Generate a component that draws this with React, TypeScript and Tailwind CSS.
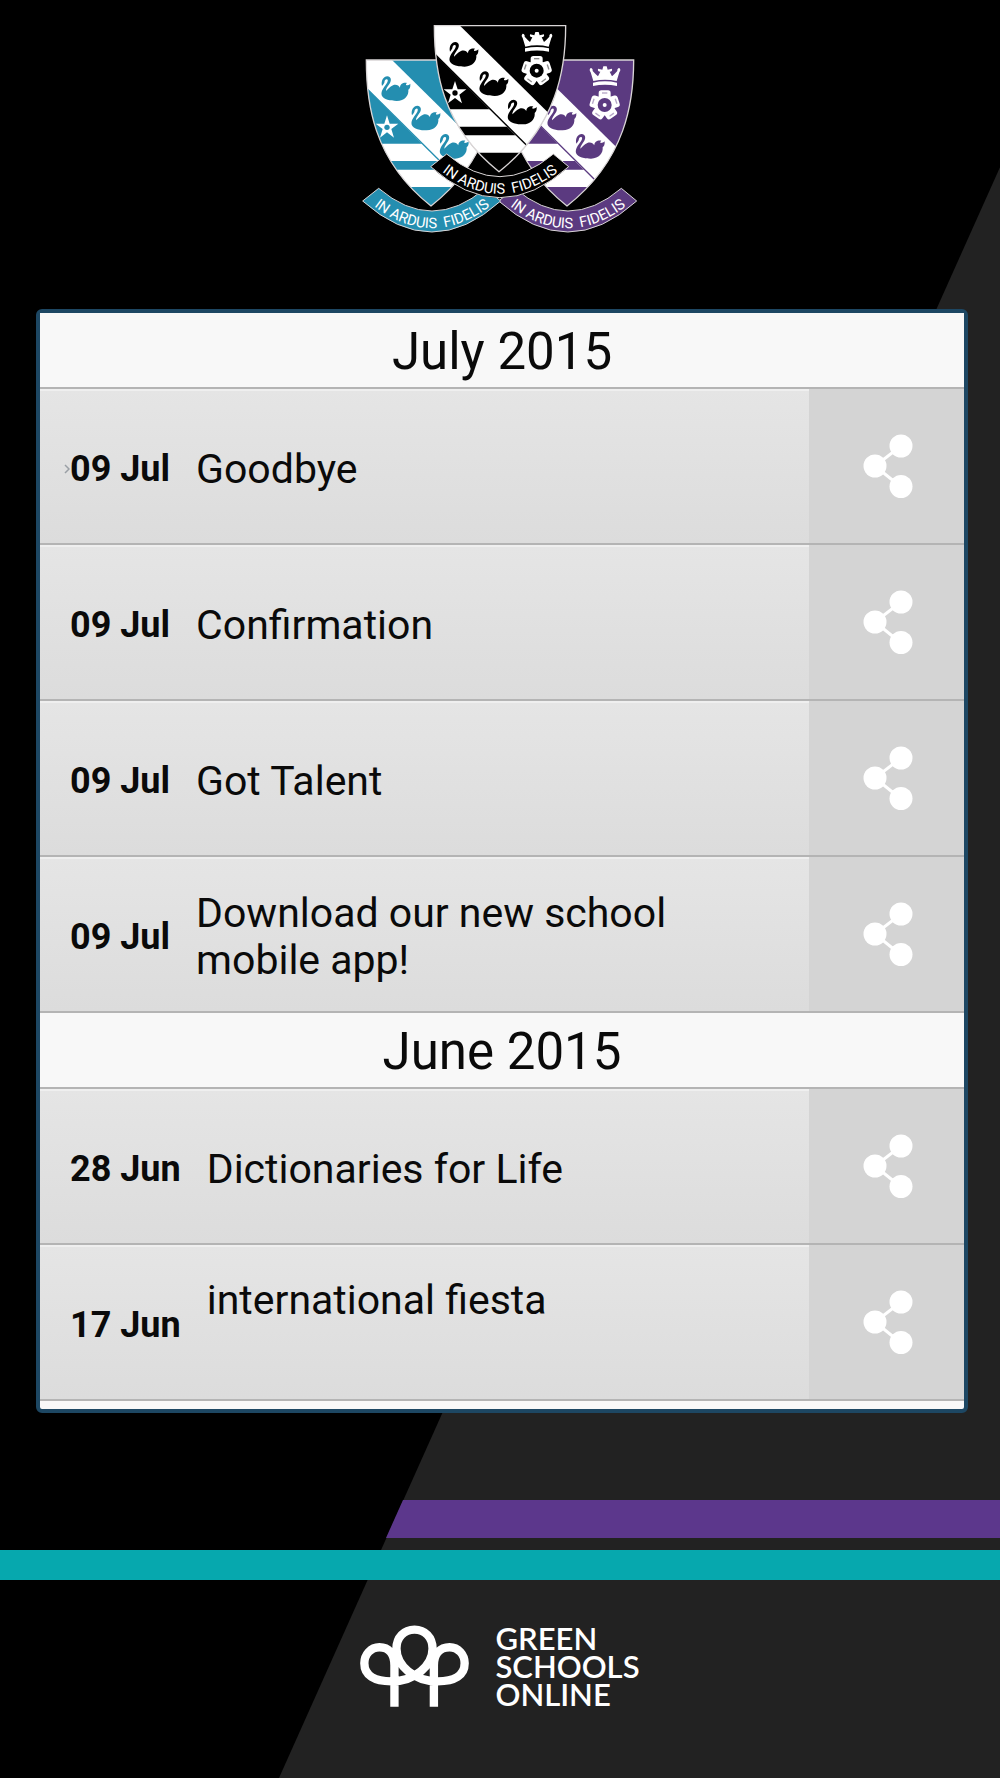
import React from "react";

type Notice = { date: string; title: string; marked?: boolean; short?: boolean };
type Month = { name: string; notices: Notice[] };

const months: Month[] = [
  {
    name: "July 2015",
    notices: [
      { date: "09 Jul", title: "Goodbye", marked: true },
      { date: "09 Jul", title: "Confirmation" },
      { date: "09 Jul", title: "Got Talent" },
      { date: "09 Jul", title: "Download our new school mobile app!" },
    ],
  },
  {
    name: "June 2015",
    notices: [
      { date: "28 Jun", title: "Dictionaries for Life" },
      { date: "17 Jun", title: "international fiesta", short: true },
    ],
  },
];

const SHIELD = "M43 47H437C437 170 415 345 237 485C60 345 43 170 43 47Z";
const SWAN =
  "M3 28C-1 12 8 -1 19 -1C30 0 32 10 27 19C21 29 14 36 15 43C21 38 26 30 36 26C46 22 53 27 57 33C57 23 66 17 78 19C74 22 74 26 77 26C81 26 85 24 88 21C89 32 85 37 82 39C84 56 71 73 47 73C29 73 7 70 2 56C-2 42 13 28 19 17C22 10 20 7 16 8C11 9 11 14 10 18C8 21 6 25 3 28Z";

function Crest({ color, id, x, y }: { color: string; id: string; x: number; y: number }) {
  return (
    <g transform={`translate(${x} ${y})`}>
      <clipPath id={`${id}-clip`}>
        <path d={SHIELD} />
      </clipPath>
      <g clipPath={`url(#${id}-clip)`}>
        <rect x="40" y="40" width="400" height="450" fill={color} />
        <path d="M43 47H120L470 392V560L43 131Z" fill="#fff" />
        <path d="M40 298H211L264 350H40ZM40 376H290L322 408L300 428H40Z" fill="#fff" />
        <path d="M45 133L322 408" stroke={color} strokeWidth="4" fill="none" />
        <path d="M322 408L300 428" stroke="#fff" strokeWidth="3" />
      </g>
      <path d={SHIELD} fill="none" stroke="#d9d5d6" strokeWidth="4" />
      <g fill={color}>
        <path d={SWAN} transform="translate(87 97)" />
        <path d={SWAN} transform="translate(177 185)" />
        <path d={SWAN} transform="translate(262 270)" />
      </g>
      <path
        d="M105 213L113 238L139 238L118 254L126 280L105 264L84 280L92 254L71 238L97 238Z"
        fill="#fff"
      />
      <circle cx="105" cy="249" r="8" fill={color} />
      <g fill="#fff">
        <path d="M316 110L308 84Q302 76 308 71Q315 72 314 80Q325 92 330 96L337 82Q328 82 330 73L343 76L346 66H356L359 76L372 73Q374 82 365 82L372 96Q377 92 388 80Q387 72 394 71Q400 76 394 84L386 110Q351 102 316 110Z" />
        <path d="M315 115Q351 107 387 115V125Q351 118 315 125Z" />
        {[0, 72, 144, 216, 288].map((a) => (
          <g key={a} transform={`rotate(${a} 350 182)`}>
            <rect x="332" y="138" width="36" height="26" rx="8" />
            <rect x="342" y="144" width="16" height="4" fill={color} opacity="0.45" />
          </g>
        ))}
        <circle cx="350" cy="182" r="31" />
      </g>
      <circle cx="350" cy="182" r="21" fill={color} />
      <circle cx="350" cy="182" r="6" fill="#fff" />
      <path
        d="M80 432Q240 568 400 432L446 470Q240 656 32 470Z"
        fill={color}
        stroke="#d9d5d6"
        strokeWidth="3"
      />
      <path id={`${id}-motto`} d="M50 473Q240 630 430 473" fill="none" />
      <text fill="#fff" fontFamily="Roboto, sans-serif" fontSize="44" textAnchor="middle">
        <textPath href={`#${id}-motto`} startOffset="50%">
          IN ARDUIS&#160; FIDELIS
        </textPath>
      </text>
    </g>
  );
}

function SchoolCrest() {
  return (
    <svg viewBox="0 0 840 642" className="h-[214px] w-[280px]" role="img" aria-label="In Arduis Fidelis school crest">
      <Crest id="purple" color="#5b3a80" x={384} y={73} />
      <Crest id="teal" color="#248eb0" x={-24} y={73} />
      <Crest id="black" color="#000" x={180} y={-30} />
    </svg>
  );
}

function ShareIcon() {
  return (
    <svg viewBox="0 0 52 64" className="h-16 w-[52px]" fill="#fff" aria-hidden="true">
      <path d="M40 12L14 32L40 53" fill="none" stroke="#fff" strokeWidth="3" />
      <circle cx="14" cy="32" r="11.5" />
      <circle cx="40" cy="12" r="11.5" />
      <circle cx="40" cy="52.5" r="11.5" />
    </svg>
  );
}

function NoticeRow({ notice }: { notice: Notice }) {
  return (
    <li className="flex h-[156px] border-b-2 border-[#b4b4b4]">
      <a
        href="#notice"
        className="flex min-w-0 flex-1 items-center gap-[26px] border-t-2 border-[#efefef] bg-linear-to-b from-[#e5e5e5] to-[#dcdcdc] pt-1 pr-8 pl-[30px] text-[#0a0a0a]"
      >
        <span className="relative shrink-0 text-4xl font-bold whitespace-nowrap">
          {notice.marked && (
            <svg
              viewBox="0 0 6 10"
              className="absolute top-1/2 -left-1.5 h-2.5 w-1.5 -translate-y-1/2"
              fill="none"
              stroke="#9a9fa5"
              strokeWidth="1.5"
              aria-hidden="true"
            >
              <path d="M1 1L5 5L1 9" />
            </svg>
          )}
          {notice.date}
        </span>
        <span className={notice.short ? "min-h-24 text-[41px] leading-[47px]" : "text-[41px] leading-[47px]"}>
          {notice.title}
        </span>
      </a>
      <button
        type="button"
        aria-label={`Share ${notice.title}`}
        className="flex w-[155px] shrink-0 items-center justify-center bg-[#d4d4d4]"
      >
        <ShareIcon />
      </button>
    </li>
  );
}

function TreeLogo() {
  return (
    <svg viewBox="0 0 326 244" className="h-[82px] w-[109px]" fill="none" stroke="#fff" strokeWidth="25" aria-hidden="true">
      <path d="M103 244V120C103 85 86 66 58 66C32 66 13 88 13 114C13 150 42 168 94 168C165 168 217 120 217 70C217 36 194 13 163 13C132 13 109 36 109 70C109 120 161 168 232 168C284 168 313 150 313 114C313 88 294 66 268 66C240 66 221 85 221 120V244" />
    </svg>
  );
}

export default function App() {
  return (
    <div className="relative isolate flex min-h-screen flex-col bg-black font-[Roboto,sans-serif]">
      <div className="absolute inset-0 -z-10 bg-[#222] [clip-path:polygon(100%_9.4%,100%_100%,27.9%_100%)]" />
      <header className="flex justify-center pt-5 pb-[75px]">
        <SchoolCrest />
      </header>
      <main className="mr-8 ml-9 rounded-md border-4 border-[#1d4763] bg-[#f8f8f8] pb-2">
        {months.map((month) => (
          <section key={month.name}>
            <h2 className="flex h-[76px] items-center justify-center border-b-2 border-[#b4b4b4] bg-[#f8f8f8] pt-1 text-[51px] text-[#0a0a0a]">
              {month.name}
            </h2>
            <ul>
              {month.notices.map((notice) => (
                <NoticeRow key={notice.title} notice={notice} />
              ))}
            </ul>
          </section>
        ))}
      </main>
      <div className="mt-[87px] ml-[38.6%] h-[38px] bg-[#5c378c] [clip-path:polygon(17px_0,100%_0,100%_100%,0_100%)]" />
      <div className="mt-3 h-[30px] bg-[#06a8ae]" />
      <footer className="flex items-center justify-center gap-[26px] pt-11 pb-[70px]">
        <TreeLogo />
        <p className="font-[Lato,sans-serif] text-[31px] leading-7 font-semibold text-white">
          <span className="block">GREEN</span>
          <span className="block">SCHOOLS</span>
          <span className="block">ONLINE</span>
        </p>
      </footer>
    </div>
  );
}
